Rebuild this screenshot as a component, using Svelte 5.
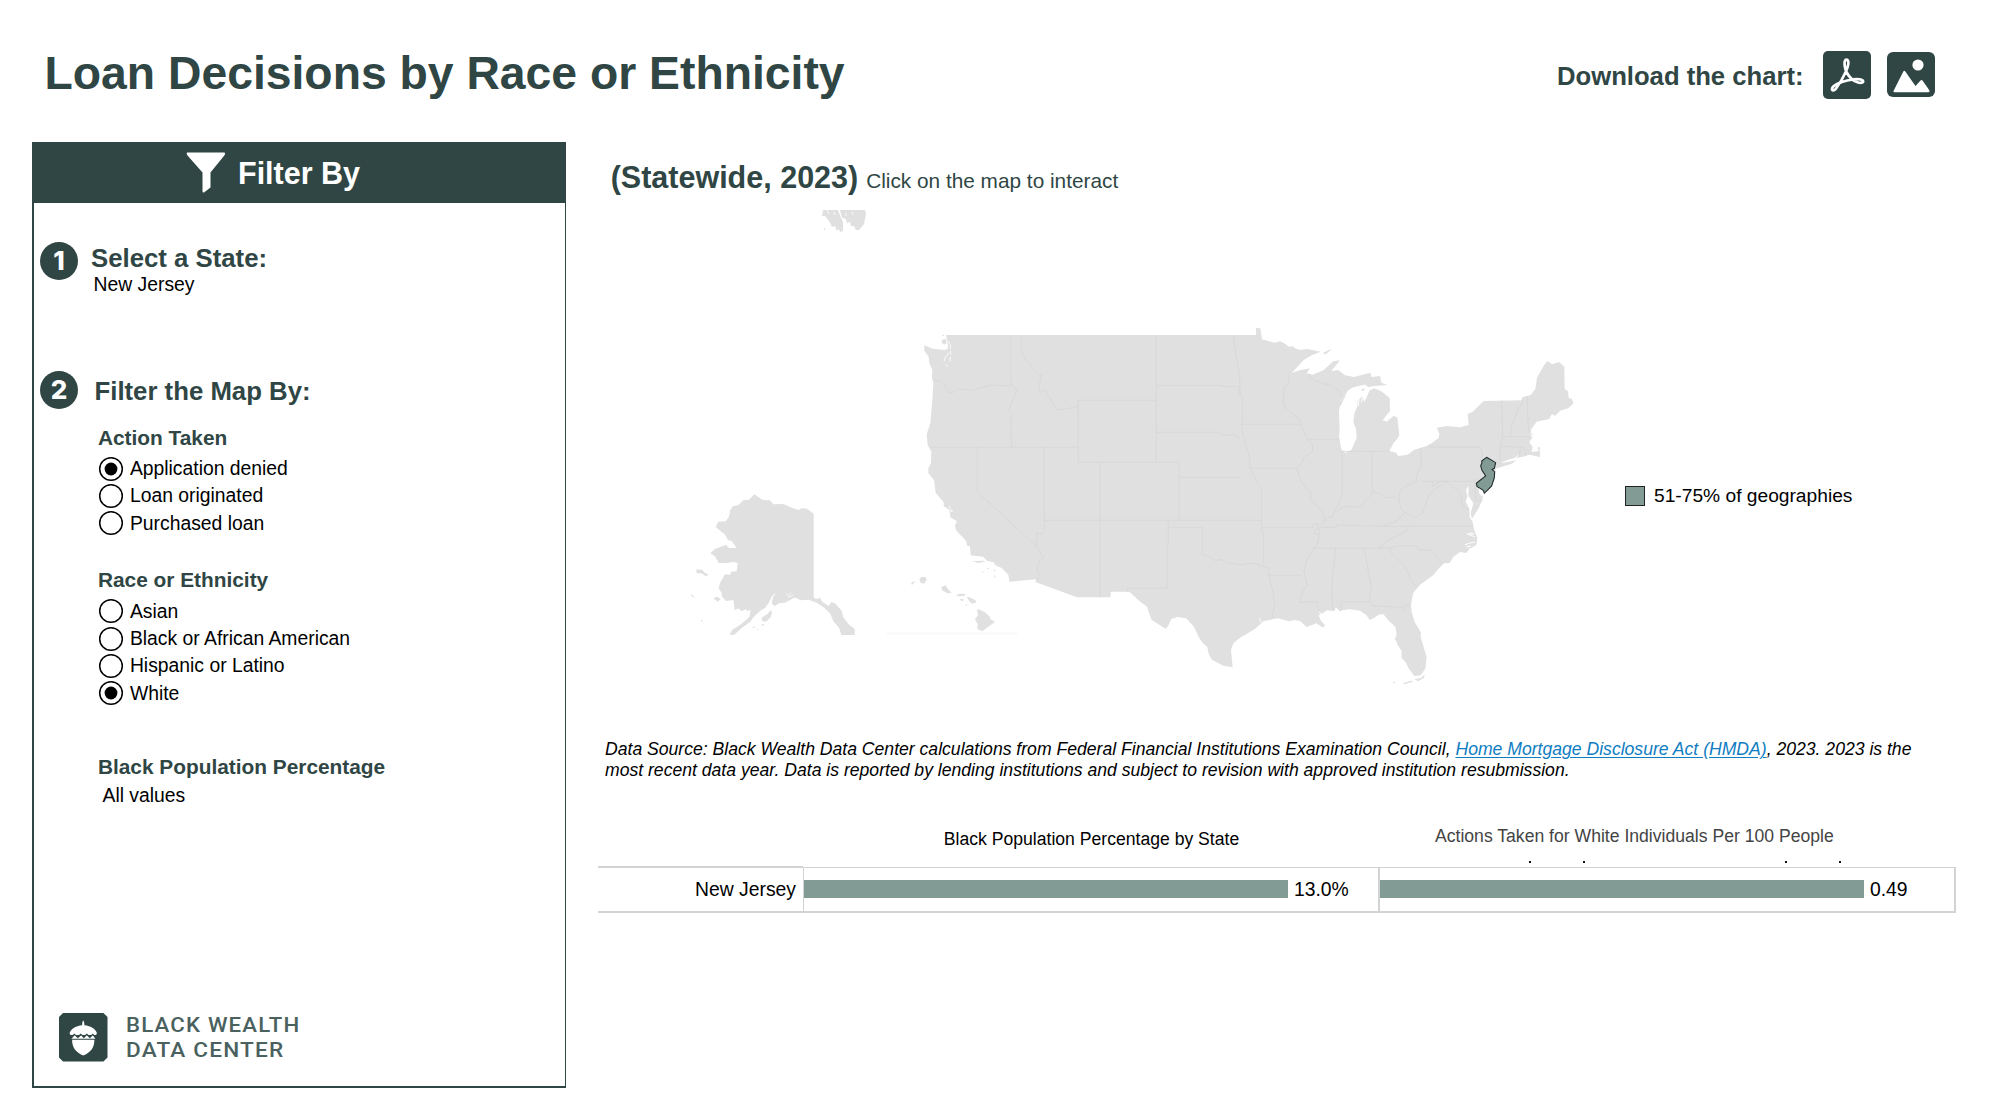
<script>
  let action = $state('Application denied');
  let race = $state('White');
  const actions = ['Application denied', 'Loan originated', 'Purchased loan'];
  const races = ['Asian', 'Black or African American', 'Hispanic or Latino', 'White'];
</script>

{#snippet options(list, value, pick)}
  <div class="options" role="radiogroup">
    {#each list as item}
      <button class="option" role="radio" aria-checked={item === value} onclick={() => pick(item)}>
        <svg class="radio" viewBox="0 0 26 26">
          <circle cx="13" cy="13" r="11.3" fill="#fff" stroke="#000" stroke-width="1.5" />
          {#if item === value}<circle cx="13" cy="13" r="6.4" />{/if}
        </svg>
        <span>{item}</span>
      </button>
    {/each}
  </div>
{/snippet}

<div class="page">
  <header>
    <h1>Loan Decisions by Race or Ethnicity</h1>
    <div class="download">
      <span>Download the chart:</span>
      <svg class="pdf" viewBox="0 0 48 48" width="48" height="48">
        <rect width="48" height="48" rx="5" fill="#2f4644" />
        <path d="M22.700 8.800c2.500-.6 3 1.800 2.500 4.700-.4 2.500-1.300 4.800-2.300 7-2.700 6-6 12-10 17.200-1.500 1.900-4.200 2.700-3.900.2.500-3.200 8-6.900 15.200-8.400 5.500-1.200 13.500-2 15.600 0 1.500 1.800-1.200 2.900-4.700 2-4.600-1.200-9.200-5.800-11.700-10.500-1.700-3.400-2.800-10.600-.7-12.200z" fill="none" stroke="#fff" stroke-width="2.700" />
      </svg>
      <svg class="img" viewBox="0 0 48 45" width="48" height="45">
        <rect width="48" height="45" rx="6" fill="#2f4644" />
        <circle cx="31" cy="13" r="5.600" fill="#fff" />
        <path d="M6.500 39 16.300 19.500q1-1.500 2 0L28.500 34l5-5.500q1-1 2 0L42.500 38.500q.4 1.800-1 1.800H7.500q-1.400 0-1-1.300z" fill="#fff" />
      </svg>
    </div>
  </header>

  <div class="body">
    <aside>
      <div class="bar">
        <svg viewBox="0 0 40 41" width="40" height="41"><path d="M1 .5h37.500q1.500 1-.2 3L24.500 20.500V35.500L18 40.500q-1.500.5-1.500-1.500V20.500L1.500 3.500Q0 1.500 1 .5z" fill="#fff" /></svg>
        <h2>Filter By</h2>
      </div>

      <div class="step one">
        <span class="badge">1</span>
        <div class="steptext">
          <h3>Select a State:</h3>
          <div class="value">New Jersey</div>
        </div>
      </div>

      <div class="step two">
        <span class="badge">2</span>
        <h3>Filter the Map By:</h3>
      </div>

      <div class="groups">
        <h4>Action Taken</h4>
        {@render options(actions, action, (v) => (action = v))}
        <h4 class="race">Race or Ethnicity</h4>
        {@render options(races, race, (v) => (race = v))}
        <h4 class="pop">Black Population Percentage</h4>
        <div class="all">All values</div>
      </div>

      <div class="logo">
        <svg viewBox="0 0 48 48" width="48.500" height="48.500">
          <path d="M4 0H44L48 4V44L44 48H4L0 44V4z" fill="#2f4644" />
          <path d="M22.800 12q.3-4 1.200-4.500.9.500 1.200 4.500c6 .7 10.800 3.300 12.200 7.500q.5 1.500-1 2.200H11.600q-1.500-.7-1-2.200c1.400-4.200 6.200-6.800 12.200-7.500z" fill="#fff" />
          <path d="M12.300 25.500 15.500 22l3.200 3L22 22l2.500 3 3-3 3 3 3-3 2.500 3.500H12.300z" fill="#fff" />
          <path d="M12.500 23.800 15 21l3.500 2.600L21.500 21l3 2.600 3-2.600 3 2.600 3-2.600 2.300 2.800" fill="none" stroke="#2f4644" />
          <path d="M13 26.500h22c.2 6.500-2.800 12.500-11 15.500-8.200-3-11.200-9-11-15.500z" fill="#fff" />
        </svg>
        <div class="wordmark"><span class="w1">BLACK WEALTH</span><span class="w2">DATA CENTER</span></div>
      </div>
    </aside>

    <main>
      <div class="maptitle"><strong>(Statewide, 2023)</strong> <span>Click on the map to interact</span></div>

      <div class="maprow">
        <svg class="map" viewBox="598 210 1002 480" width="1002" height="480">
          <!-- northern Alaska inset -->
          <path class="land" d="M823 210h15l3 8 2 4v9l-3 1-1-3-2 2-2-5-3 1-3-6-4-5-3 0z M840 210h25l1 4-2 10-5 6-3 0-2-4-3 0-1-4-3 1-1-4-4-1z M824 228h1v2h-1z" />
          <path d="M827 210l2 4M834 212l1 3M846 213v3M852 212l1 3" stroke="#fff" fill="none" stroke-width=".8" />
          <path class="soft" d="M887 632h130v3H887z" />

          <!-- Alaska and Hawaii -->
          <g transform="translate(670 480) scale(.33333)">
            <path class="land" d="M137 141 L145 125 L167 124 L176 112 L181 90 L188 79 L204 76 L222 59 L236 60 L253 43 L266 52 L278 60 L300 61 L310 73 L340 72 L362 82 L385 90 L397 84 L412 87 L431 101 L431 353 L444 358 L448 351 L457 366 L476 378 L484 366 L495 370 L515 392 L520 412 L535 432 L554 447 L554 465 L514 465 L508 445 L490 424 L481 401 L463 383 L440 368 L416 359 L392 361 L373 352 L358 356 L348 367 L330 368 L315 378 L306 372 L309 352 L322 337 L306 348 L296 369 L285 384 L270 393 L252 410 L240 426 L215 444 L193 464 L178 464 L187 449 L213 433 L238 411 L242 391 L232 392 L226 388 L214 394 L206 385 L194 391 L190 360 L168 363 L157 351 L154 337 L146 325 L150 309 L165 283 L180 284 L184 275 L200 274 L203 249 L190 246 L170 249 L146 249 L136 230 L121 220 L135 207 L168 194 L177 204 L200 204 L185 183 L174 180 L164 163z" />
            <path class="land" d="M306 372L309 352 322 337 350 340 375 352 348 367z M79 268 98 270 102 277 116 284 108 289 94 280 80 280z M62 341l6 4 6 8-7-3z M129 355l13-5 10 7-8 8z M275 413 292 402 302 391 306 398 302 412 288 425 276 423z M93 419l6 5-6 2z M272 435l10-4 0 6z M100 430l5 3-4 0z M248 441h6v3h-6z M261 448h4v3h-4z M192 178h5v18l-7-10z" />
            <path d="M348 338l8 14M362 337l-3 10M370 345l-15 8" stroke="#fff" stroke-width="2" fill="none" />
            <path class="land" d="M722 312l7-7 7-1-9 10z M748 297l7-6 12 0 3 9-8 11-10-3z M813 322l14-6 5 9 13 14-12 1-15-8z M859 346l9-5 18 1-2 5-20 2z M870 358l9-2 3 5-8 3z M891 353l5-3 8 5 12 5 4 7-14 4-9-9z M886 375l7-3-3 6z M921 391l3-4 20 9 16 15 0 5 15 10-22 15-16 13-15-7 1-14-8-15 9-12z" />
          </g>

          <!-- Contiguous states, western part -->
          <g transform="translate(900 310) scale(.33333)">
            <path class="land" d="M138 75 L1020 75 L1020 983 L1000 1000 L993 1020 L998 1072 L970 1067 L937 1050 L926 1032 L922 1011 L908 999 L896 981 L882 950 L858 925 L832 921 L814 927 L804 949 L797 956 L755 930 L747 909 L741 890 L718 873 L688 845 L632 845 L632 862 L531 862 L406 816 L409 808 L328 815 L325 794 L305 774 L286 766 L281 757 L262 753 L249 740 L212 736 L210 709 L201 707 L199 694 L168 661 L165 646 L171 634 L151 622 L148 600 L131 588 L131 577 L107 548 L102 510 L85 490 L85 475 L93 460 L94 425 L83 405 L80 373 L91 340 L97 270 L100 220 L96 203 L97 180 L88 160 L86 140 L73 122 L73 106 L98 116 L135 120 L145 115z" />
            <path class="land" d="M127 89l10-2 3 12-8 5-8-8z M216 753l36-1 3 3-20 4z M246 785l6-1-3 5z M262 774h5v3h-5z M279 777l10 5-6 1z M280 793l8 9-3 1z M127 75h5v3h-5z" />
            <path d="M143 92l8 14 1 10M152 122v12M146 128l-10 14-4 12M150 140l1 14M136 163l8 6M148 588l4 14 7 2M150 600l6 6" fill="none" stroke="#fff" stroke-width="2.500" />
            <path class="line" d="M332 75V208l5 16 14 18-18 42-8 17 12 12-5 27 3 72 M102 212l20 1 12 10 7 21 15 4 20-10 43 2 58-15 58 3 M364 75v49l14 27 39 43 7 1-5 27-3 20 10 5 10-8 7 15 8 10 5 16 7 3 7 17 50-7 6-5 4 8 M533 294V271H769 M535 271V457H838V631 M535 412H91 M232 412V545L411 711 M433 412V665l-7 6-16-3 1 42 19 33-13 12-6 25 8 20-9 10 M601 457V862 M769 75V457 M769 226H956l22 4h42 M1001 75l2 31 9 50 10 66-5 20-2 5 9 10 3 86-5 27 2 15 15 42 5 25 1 20 15 22 18 14 M769 367H957l12 9 32-2 19 12 M838 502H1060 M433 631H1020 M805 631V700H802V835H683V845 M805 653H907V733l21 8 19 11 20-4 13 12 23 0 24 5" />
          </g>

          <!-- Contiguous states, eastern part -->
          <g transform="translate(1240 310) scale(.33333)">
            <path class="land" d="M0 75 L48 75 L48 54 L61 55 L66 88 L88 94 L104 98 L120 94 L132 99 L147 110 L159 109 L165 115 L180 120 L202 117 L242 125 L215 136 L192 149 L156 188 L180 181 L210 175 L200 190 L218 194 L250 181 L280 154 L300 151 L274 183 L295 180 L315 196 L342 201 L391 188 L395 201 L420 198 L424 218 L442 225 L405 228 L385 231 L374 224 L352 229 L335 234 L322 244 L312 268 L302 287 L291 293 L310 264 L324 240 L302 275 L297 303 L299 360 L297 379 L304 418 L316 429 L334 420 L350 384 L348 356 L340 337 L343 310 L352 291 L353 272 L367 258 L373 276 L382 257 L389 241 L403 235 L424 244 L449 264 L450 303 L428 330 L440 335 L461 317 L472 323 L478 376 L471 388 L461 399 L448 423 L468 428 L475 438 L503 434 L523 419 L566 406 L596 384 L598 372 L591 353 L620 348 L660 352 L686 345 L683 312 L698 305 L731 273 L848 271 L849 261 L862 258 L872 255 L886 237 L891 203 L913 164 L922 153 L937 163 L957 156 L973 170 L974 237 L984 244 L986 264 L995 266 L1001 280 L985 295 L960 302 L946 317 L935 313 L930 326 L890 335 L873 359 L870 378 L878 381 L868 396 L878 411 L875 426 L896 424 L893 410 L899 412 L900 441 L868 434 L849 440 L810 447 L790 455 L780 460 L830 451 L815 461 L767 476 L764 510 L730 553 L727 570 L716 595 L696 626 L692 610 L700 580 L685 557 L686 527 L678 540 L682 560 L677 575 L688 596 L689 622 L697 633 L702 657 L712 683 L710 703 L690 714 L679 729 L660 726 L640 741 L629 759 L612 760 L596 776 L580 795 L540 824 L519 850 L513 885 L515 905 L524 936 L543 968 L542 981 L560 1041 L556 1076 L542 1096 L523 1098 L505 1074 L497 1057 L484 1043 L485 1024 L470 1000 L464 988 L470 975 L466 950 L446 932 L430 912 L416 914 L402 924 L389 930 L379 915 L360 902 L330 898 L305 901 L301 905 L287 892 L284 903 L261 901 L250 908 L236 916 L243 933 L256 946 L248 953 L230 940 L200 951 L181 934 L164 930 L147 934 L114 925 L72 933 L62 941 L45 957 L0 983z" />
            <path class="land" d="M248 130l18-10 9-2-18 15z M459 1116h6v3h-6z M487 1120l28-8 5 3-25 7z M523 1108l20-4 12-12-4 12-16 10z M690 712l23-8-20 11z M362 240l12-7-2 10z" />
            <path d="M690 669l12 2-20 1 22 8M675 704l22-7 8 0M678 711l15-3M355 288l2-20M365 278l2-20M820 448l15-12M237 905l10 12M466 990l4 12M930 325l8-12M58 925l6 12" fill="none" stroke="#fff" stroke-width="3" />
            <path d="M715 530L731 549L727 560L718 550z" fill="#fff" />
            <path class="line" d="M0 207V254l7 3V330l-2 25 12 50 10 30 3 39 18 38 17 28V653l6 28V770l15 3V796l13 50 5 34-8 45 M5 343H182 M27 475H170 M66 653H217l5-12 12 2 0 10-12 18 14 2 M0 631H66 M0 765l25-4 25 0 20 10 M88 796H185 M146 190V222l-14 10-2 55 20 17 30 25 3 18 20 42 14 15 1 20-27 18-4 15-17 18 14 40 18 25 12 5-4 26 38 30 0 15 11 15-20 22-4 40-12 25-10 10-14 25-7 32 9 42-12 17-9 32H232l4 28 M203 388H298 M204 192l20 20 50 15 24 15 8 20 M307 424V545l-7 30-14 25-10 20-22 6-10 12 M307 424H448 M397 424V550l-24 24-6 12-22 6-25-4-20 7-10 12 M397 545l23 6 15 12 30-2 12 10 4-30 20-14 27-12 5-30 10-15V415 M477 570l5 25 15 14 26 13 24-12 10-30 13-30 20-16 20-12 12-10 M495 607l-24 26-42 15 M243 653l46-1V645l140 4H698 M545 514H704l3 58h20 M568 402v9H721l6 20-2 12 M577 514v16l15-12 15-6 16 6 18 14 20 15 5 35 20 18 M505 649l-7 15-20 12-30 12-32 27 M217 715H447 M416 715H447l29-8 52 1 8 12h37L606 760 M287 715L275 830l3 70 M373 715l16 93 5 15-4 25-1 27H304v25 M390 875l6 12 91 5 4 10 3-17 16-1 M450 715l5 15 40 40 18 40 17 22 M785 271l3 107-7 31-1 53 M811 378l4-30 12-30 5-20 14-16 2-20 M861 258l4 100 8 15 M787 380h80l11-9 M780 409l70 3 6 15 2 12 M841 412l-2 28 M704 514l5-8" />
            <path d="M740 442l27 16-4 17-7 4 8 6-1 18-8 25-16 16-6 5-3-8-19-12-2-9 28-22-11-17-4-14 4-9-1-5z" fill="#829b95" stroke="#222b2a" stroke-width="3.200" />
          </g>
        </svg>
        <div class="legend"><i></i><span>51-75% of geographies</span></div>
      </div>

      <p class="source"><span class="l1">Data Source: Black Wealth Data Center calculations from Federal Financial Institutions Examination Council, <a href="#hmda">Home Mortgage Disclosure Act (HMDA)</a>, 2023. 2023 is the</span><br /><span class="l2">most recent data year. Data is reported by lending institutions and subject to revision with approved institution resubmission.</span></p>

      <div class="heads">
        <div></div>
        <div class="h-left">Black Population Percentage by State</div>
        <div class="h-right">Actions Taken for White Individuals Per 100 People</div>
      </div>
      <div class="ticks"><i></i><i></i><i></i><i></i></div>
      <div class="chart">
        <div class="name">New Jersey</div>
        <div class="cell first"><div class="fill"></div><span>13.0%</span></div>
        <div class="cell second"><div class="fill"></div><span>0.49</span></div>
      </div>
    </main>
  </div>
</div>

<style>
  :global(body) { background: #fff; overflow: hidden; }
  .page { width: 1989px; height: 1118px; font-family: "Liberation Sans", Arial, sans-serif; font-size: 19.330px; color: #000; }
  h1, h2, h3, h4, p { margin: 0; color: #2f4644; }
  svg { display: block; flex: none; }
  header { display: flex; justify-content: space-between; align-items: flex-start; height: 142px; box-sizing: border-box; padding: 0 54.500px 0 44.500px; }
  h1 { margin-top: 48px; font-size: 46.300px; line-height: 50px; white-space: nowrap; }
  .download { display: flex; margin-top: 51px; font-size: 25.650px; font-weight: bold; line-height: 50px; color: #2f4644; }
  .pdf { margin-left: 19px; }
  .img { margin: 1px 0 0 16px; }
  .body { display: flex; padding-left: 32px; }
  aside { width: 534px; height: 946px; box-sizing: border-box; border: solid #2f4644; border-width: 0 1px 2px 2px; display: flex; flex-direction: column; flex: none; }
  .bar { height: 61px; background: #2f4644; display: flex; align-items: center; gap: 12px; padding-left: 152px; margin-right: -1px; flex: none; }
  .bar h2 { color: #fff; font-size: 30.500px; line-height: 36px; padding-top: 1px; }
  .step { display: flex; margin-left: 6px; }
  .one { margin-top: 38.500px; height: 129.500px; }
  .two { height: 54.500px; }
  .badge { width: 38px; height: 38px; border-radius: 50%; background: #2f4644; color: #fff; font: 800 26px/38px Inter, sans-serif; text-align: center; flex: none; }
  h3 { font-size: 25.750px; line-height: 30px; }
  .steptext { padding: 1.300px 0 0 13px; }
  .value { line-height: 24px; padding-left: 2.500px; }
  .two h3 { padding: 4.800px 0 0 16.500px; }
  .groups { padding-left: 63.900px; }
  h4 { font-size: 20.850px; line-height: 24px; }
  .race { margin-top: 31.200px; }
  .pop { margin-top: 48.100px; }
  .all { margin-top: 4.800px; padding-left: 4.600px; line-height: 24px; }
  .options { margin-top: 5.600px; }
  .option { display: flex; align-items: center; gap: 6px; height: 27.250px; padding: 0; border: 0; background: none; font: inherit; color: #000; line-height: 27px; }
  .radio { width: 26px; height: 26px; }
  .logo { display: flex; margin: auto 0 22.800px 25px; gap: 18px; }
  .wordmark { display: flex; flex-direction: column; color: #4a615e; font: 500 20.700px/25px Roboto, sans-serif; letter-spacing: 1.100px; }
  .wordmark span { white-space: nowrap; transform-origin: left; }
  .w1 { transform: scaleX(1.073); }
  .w2 { transform: scaleX(1.090); }
  main { width: 1358px; margin-left: 32px; flex: none; }
  .maptitle { display: flex; align-items: baseline; height: 51.500px; padding: 16.500px 0 0 12.700px; box-sizing: content-box; color: #2f4644; line-height: 36px; white-space: nowrap; }
  .maptitle strong { font-size: 30.500px; }
  .maptitle span { font-size: 20.800px; margin-left: 8px; }
  .maprow { display: flex; align-items: flex-start; }
  .land { fill: #e0e0e0; }
  .soft { fill: #fafafa; }
  .line { fill: none; stroke: #d6d6d6; stroke-width: 2.500; }
  .legend { display: flex; align-items: center; gap: 9px; margin: 275px 0 0 25px; white-space: nowrap; height: 22px; font-size: 19.200px; }
  .legend i { width: 18px; height: 18px; background: #829b95; border: 1px solid #222; }
  .source { margin: 49.200px 0 0 7px; font-size: 17.600px; line-height: 21.300px; font-style: italic; color: #000; white-space: nowrap; }
  .source a { color: #0f7dc2; text-decoration: underline; text-underline-offset: 2px; }
  .heads { display: grid; grid-template-columns: 206px 575px 577px; margin-top: 42.600px; font-size: 17.600px; line-height: 24px; height: 36.600px; }
  .h-left { text-align: center; padding-top: 2.500px; }
  .h-right { padding-left: 56px; color: #444; }
  .ticks { display: grid; grid-template-columns: 54px 202px 54px 2px; padding-left: 931px; height: 5px; }
  .ticks i { width: 2px; height: 2px; background: #111; }
  .chart { display: grid; grid-template-columns: 205px 576px 577px; height: 47px; }
  .name { box-sizing: border-box; border-top: 2px solid #d3d3d3; border-bottom: 2px solid #d3d3d3; text-align: right; padding-right: 7px; line-height: 43px; }
  .cell { box-sizing: border-box; display: flex; align-items: center; margin-top: 1px; border: solid #d3d3d3; border-width: 1px 0 2px 1px; line-height: 43px; }
  .second { border-width: 1px 2px 2px 2px; margin-left: -1px; }
  .fill { height: 18px; width: 484px; background: #829b95; margin-right: 6px; }
</style>
